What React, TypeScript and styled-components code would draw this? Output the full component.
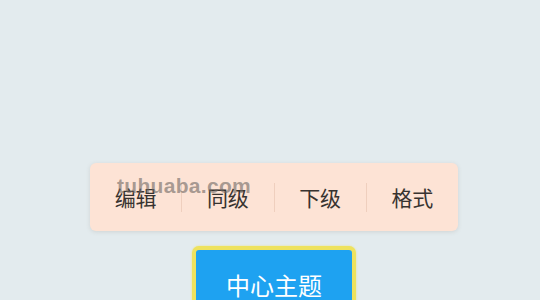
import React from "react";
import styled, { createGlobalStyle } from "styled-components";

const Global = createGlobalStyle`
  html, body {
    margin: 0;
    padding: 0;
    width: 540px;
    height: 300px;
    overflow: hidden;
    background: #e3ebee;
    font-family: "Noto Sans CJK SC", "Noto Sans", sans-serif;
  }
`;

const Page = styled.div`
  position: relative;
  width: 540px;
  height: 300px;
  display: flex;
  flex-direction: column;
  align-items: center;
  padding-top: 163px;
  box-sizing: border-box;
  overflow: hidden;
`;

const Toolbar = styled.div`
  flex-shrink: 0;
  display: flex;
  align-items: center;
  width: 368px;
  height: 68px;
  margin-left: 8px;
  background: #fde3d5;
  border-radius: 6px;
  box-shadow: 0 1px 4px rgba(120, 110, 100, 0.18);
`;

const Item = styled.div`
  flex: 1;
  height: 100%;
  display: flex;
  align-items: center;
  justify-content: center;
  font-size: 21px;
  color: #383330;
  line-height: 1;
  padding-top: 1px;
  box-sizing: border-box;
`;

const Sep = styled.div`
  width: 1px;
  height: 29px;
  background: #efcfbe;
`;

const Topic = styled.div`
  flex-shrink: 0;
  margin-top: 15px;
  margin-left: 8px;
  width: 164px;
  height: 78px;
  box-sizing: border-box;
  border: 4px solid #eee25e;
  border-radius: 7px;
  background: #1ea2f1;
  box-shadow: 0 0 2px rgba(238, 226, 94, 0.8);
  display: flex;
  align-items: center;
  justify-content: center;
  color: #ffffff;
  font-size: 24px;
  line-height: 1;
`;

const Watermark = styled.div`
  position: absolute;
  left: 117px;
  top: 174px;
  font-family: "Liberation Sans", Arial, sans-serif;
  font-weight: bold;
  font-size: 21px;
  color: rgba(110, 104, 100, 0.6);
  pointer-events: none;
  letter-spacing: 0.3px;
`;

const items = ["编辑", "同级", "下级", "格式"];

export default function App() {
  return (
    <>
      <Global />
      <Page>
        <Toolbar>
          {items.map((t, i) => (
            <React.Fragment key={t}>
              {i > 0 && <Sep />}
              <Item>{t}</Item>
            </React.Fragment>
          ))}
        </Toolbar>
        <Topic>中心主题</Topic>
        <Watermark>tuhuaba.com</Watermark>
      </Page>
    </>
  );
}
